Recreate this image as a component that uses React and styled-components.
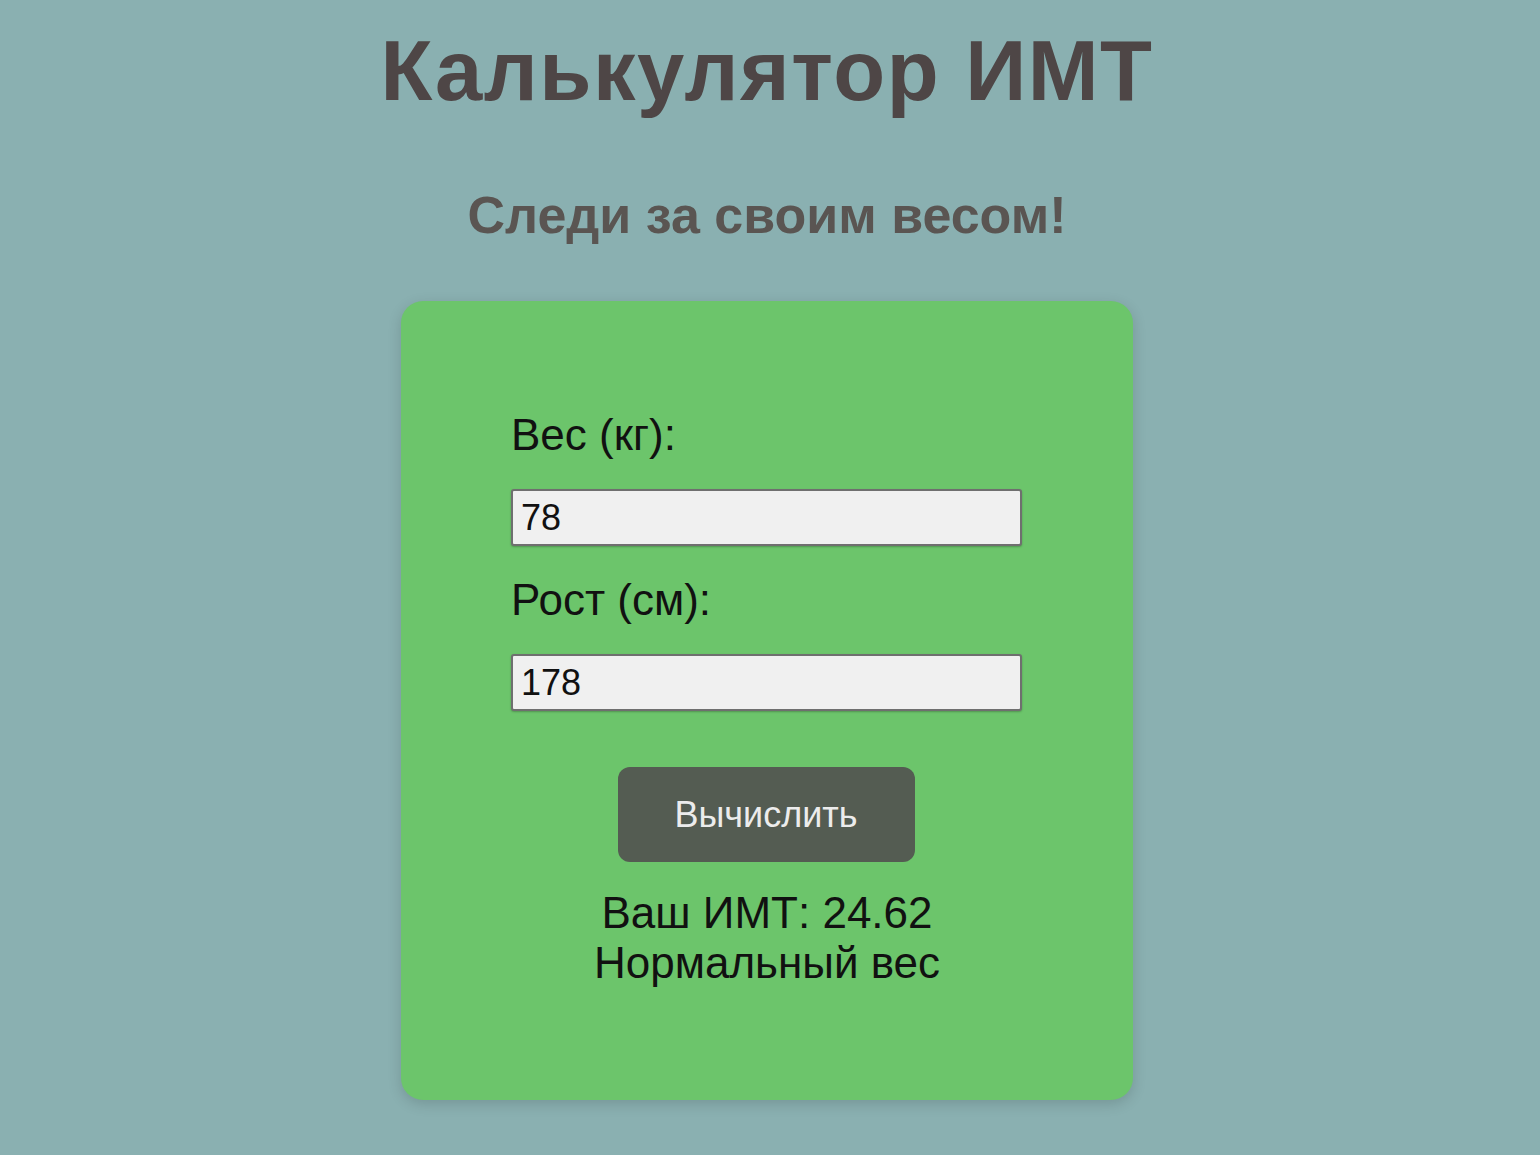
import React, { useState } from 'react';
import styled, { createGlobalStyle } from 'styled-components';

const GlobalStyle = createGlobalStyle`
  body {
    margin: 0;
    background: #8ab0b1;
    font-family: "Liberation Sans", Arial, sans-serif;
  }
`;

const Page = styled.div`
  display: flex;
  flex-direction: column;
  align-items: center;
  padding: 29px 6px 0 0;
  min-height: 1155px;
  box-sizing: border-box;
`;

const Title = styled.h1`
  margin: 0;
  font-size: 85px;
  font-weight: 700;
  letter-spacing: 1.5px;
  color: #4e4646;
  line-height: 84px;
`;

const Subtitle = styled.h2`
  margin: 76px 0 0;
  font-size: 52px;
  font-weight: 700;
  color: #5a5552;
  line-height: 52px;
`;

const Card = styled.div`
  margin-top: 60px;
  width: 732px;
  height: 799px;
  box-sizing: border-box;
  padding: 106px 110px 0;
  background: #6cc56b;
  border-radius: 22px;
  box-shadow: 0 4px 14px rgba(0, 0, 0, 0.15);
  display: flex;
  flex-direction: column;
`;

const Label = styled.label`
  font-size: 44px;
  line-height: 56px;
  color: #111;
  margin-bottom: 26px;
`;

const Input = styled.input`
  width: 511px;
  height: 57px;
  box-sizing: border-box;
  padding: 0 8px;
  font-family: "Liberation Sans", Arial, sans-serif;
  font-size: 36px;
  color: #111;
  background: #f0f0f0;
  border: 2px solid #6f6f6f;
  border-radius: 3px;
  box-shadow: 0 1px 2px rgba(0, 0, 0, 0.25);
  margin-bottom: 26px;
  outline: none;
`;

const Button = styled.button`
  align-self: center;
  margin-top: 30px;
  width: 297px;
  height: 95px;
  margin-left: -2px;
  background: #545c52;
  color: #ececec;
  border: none;
  border-radius: 12px;
  font-family: "Liberation Sans", Arial, sans-serif;
  font-size: 36px;
  cursor: pointer;
`;

const Result = styled.div`
  margin-top: 26px;
  text-align: center;
  font-size: 44px;
  line-height: 50px;
  color: #111;
`;

export default function App() {
  const [weight, setWeight] = useState('78');
  const [height, setHeight] = useState('178');
  const [bmi, setBmi] = useState(24.62);

  const calculer = () => {
    const h = parseFloat(height) / 100;
    const w = parseFloat(weight);
    if (h > 0 && w > 0) setBmi(Math.round((w / (h * h)) * 100) / 100);
  };

  const categorie = (v) => {
    if (v < 18.5) return 'Недостаточный вес';
    if (v < 25) return 'Нормальный вес';
    if (v < 30) return 'Избыточный вес';
    return 'Ожирение';
  };

  return (
    <>
      <GlobalStyle />
      <Page>
        <Title>Калькулятор ИМТ</Title>
        <Subtitle>Следи за своим весом!</Subtitle>
        <Card>
          <Label>Вес (кг):</Label>
          <Input value={weight} onChange={(e) => setWeight(e.target.value)} />
          <Label>Рост (см):</Label>
          <Input value={height} onChange={(e) => setHeight(e.target.value)} />
          <Button onClick={calculer}>Вычислить</Button>
          <Result>
            <div>Ваш ИМТ: {bmi.toFixed(2)}</div>
            <div>{categorie(bmi)}</div>
          </Result>
        </Card>
      </Page>
    </>
  );
}
